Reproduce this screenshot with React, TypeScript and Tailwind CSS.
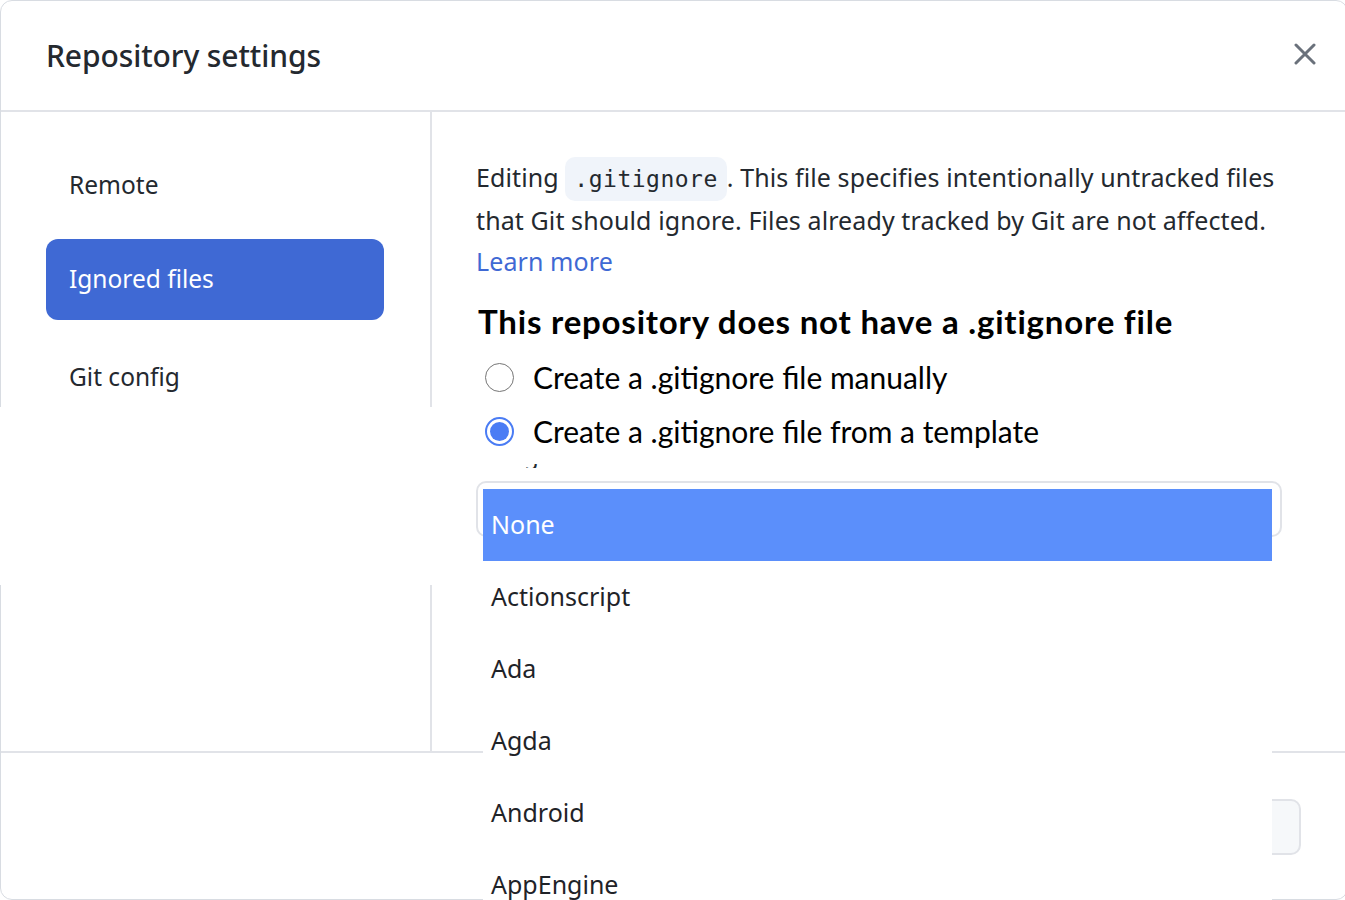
import React from 'react';

const sidebarItems = ['Remote', 'Ignored files', 'Git config'];
const templates = ['None', 'Actionscript', 'Ada', 'Agda', 'Android', 'AppEngine', 'AppceleratorTitanium'];

const uiFont = { fontFamily: '"Noto Sans", "Open Sans", sans-serif' };
const calFont = { fontFamily: 'Lato, "Noto Sans", sans-serif' };

const App: React.FC = () => {
  return (
    <div className="h-[900px] w-full overflow-hidden bg-white" style={uiFont}>
      <div className="relative flex h-full w-[1348px] flex-col rounded-xl border border-[#d8dce2] bg-white">
        {/* header */}
        <div className="flex h-[111px] shrink-0 items-center justify-between border-b-2 border-[#e1e3e8] pl-[45px] pr-[31px]">
          <h1 className="text-[30px] font-medium tracking-[-0.1px] text-[#24292f]">Repository settings</h1>
          <svg width="22" height="22" viewBox="0 0 22 22" className="mb-[4px]">
            <path d="M2 2L20 20M20 2L2 20" stroke="#6a717b" strokeWidth="3" strokeLinecap="round" />
          </svg>
        </div>

        {/* body */}
        <div className="flex h-[639px] shrink-0">
          <div className="flex w-[431px] shrink-0 flex-col gap-[15px] border-r-2 border-[#e1e3e8] pl-[45px] pr-[46px] pt-[31px]">
            {sidebarItems.map((item) => (
              <div
                key={item}
                className={
                  item === 'Ignored files'
                    ? 'flex h-[81px] items-center rounded-xl bg-[#3f69d4] px-[23px] text-[24.5px] text-white'
                    : 'flex h-[81px] items-center px-[23px] pt-[3px] text-[24.5px] text-[#24292f]'
                }
              >
                {item}
              </div>
            ))}
          </div>

          <div className="flex-1 pl-[44px] pr-[65px] pt-[45px]">
            <p className="text-[25px] leading-[41px] tracking-[0.1px] text-[#24292f]">
              Editing{' '}
              <span
                className="rounded-[10px] bg-[#f0f4fa] px-[9px] py-[9px] text-[23px] tracking-[0.5px]"
                style={{ fontFamily: '"DejaVu Sans Mono", "Liberation Mono", monospace' }}
              >
                .gitignore
              </span>
              . This file specifies intentionally untracked files that Git should ignore. Files already tracked by
              Git are not affected.
              <br />
              <span className="text-[#3f69d4]">Learn more</span>
            </p>

            <h2
              className="mt-[19px] ml-[2px] text-[33px] font-bold leading-[40px] tracking-[0.8px] text-black"
              style={calFont}
            >
              This repository does not have a .gitignore file
            </h2>

            <div className="mt-[9px] flex flex-col" style={calFont}>
              <label className="flex h-[54px] items-center gap-[19px] pl-[9px] text-[30px] text-black">
                <span className="h-[29px] w-[29px] rounded-full border border-[#767676] bg-white" />
                Create a .gitignore file manually
              </label>
              <label className="flex h-[54px] items-center gap-[19px] pl-[9px] text-[30px] text-black">
                <span className="flex h-[29px] w-[29px] items-center justify-center rounded-full border-2 border-[#4a7cf4] bg-white">
                  <span className="h-[19px] w-[19px] rounded-full bg-[#4a7cf4]" />
                </span>
                Create a .gitignore file from a template
              </label>
            </div>

            <div className="mt-[6px] h-[4px] overflow-hidden pl-[48px]">
              <div className="-mt-[21px] text-[24px] leading-[24px] text-[#24292f]">g</div>
            </div>

            <div className="mt-[13px] h-[56px] rounded-[10px] border-2 border-[#e1e3e8] bg-white" />
          </div>
        </div>

        {/* footer */}
        <div className="flex flex-1 justify-end border-t-2 border-[#e1e3e8] pr-[46px] pt-[46px]">
          <div className="h-[56px] w-[200px] rounded-[10px] border-2 border-[#e1e3e8] bg-[#f6f8fa]" />
        </div>

        {/* repaint area left behind by the open select popup */}
        <div className="absolute left-[-1px] top-[406px] h-[178px] w-[450px] bg-white" />

        {/* native select popup */}
        <div className="absolute left-[482px] top-[488px] w-[789px] bg-white">
          {templates.map((t, i) => (
            <div
              key={t}
              className={
                i === 0
                  ? 'flex h-[72px] items-center bg-[#5b8ffb] px-[8px] text-[25px] text-white'
                  : 'flex h-[72px] items-center px-[8px] text-[25px] text-[#1f2328]'
              }
            >
              {t}
            </div>
          ))}
        </div>
      </div>
    </div>
  );
};

export default App;
